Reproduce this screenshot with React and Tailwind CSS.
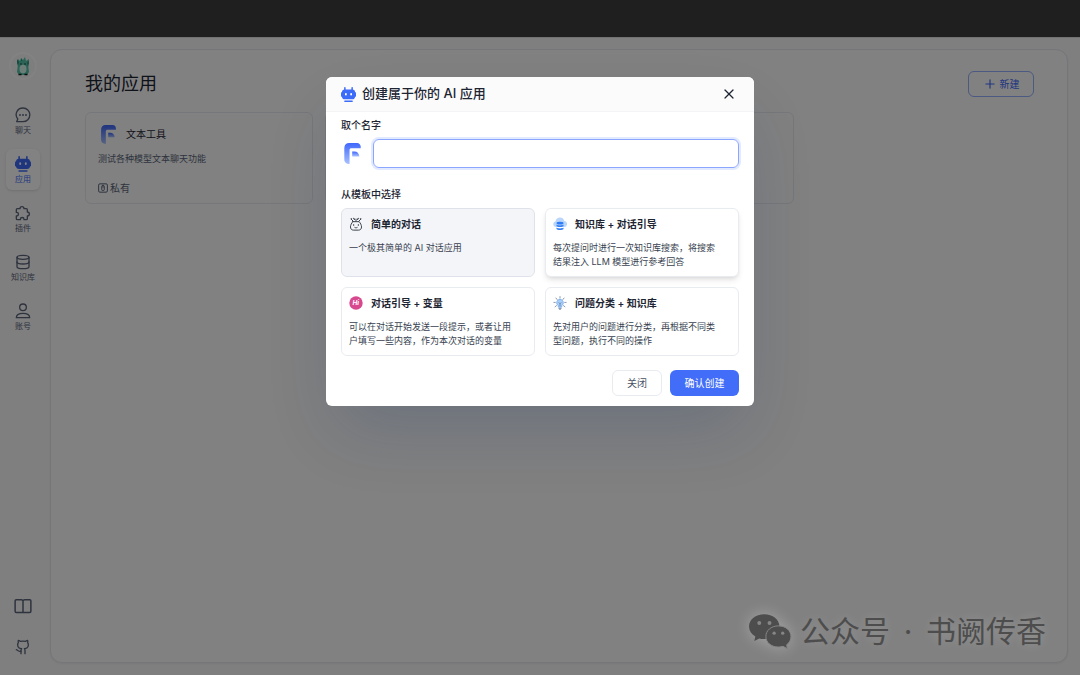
import React, { useState } from "react";
import { Database, Github, Plus, X } from "lucide-react";

function ChatIcon({ className }) {
  return (
    <svg viewBox="0 0 24 24" fill="none" className={className} stroke="currentColor" strokeWidth="2" strokeLinecap="round" strokeLinejoin="round">
      <path d="M12 1.500a10 10 0 1 1 0 20.500H2.500l1.700-4A10 10 0 0 1 12 1.500z" />
      <path d="M7.500 12h.01M12 12h.01M16.500 12h.01" strokeWidth="2.800" />
    </svg>
  );
}

function RobotIcon({ className }) {
  return (
    <svg viewBox="0 0 24 24" className={className} fill="currentColor">
      <rect x="5" y="0" width="2.400" height="6" rx="1.200" />
      <rect x="16.600" y="0" width="2.400" height="6" rx="1.200" />
      <rect x="0" y="8" width="24" height="8" rx="2" />
      <rect x="1.500" y="4" width="21" height="15.500" rx="4.500" />
      <rect x="6.400" y="9.500" width="2.800" height="4" rx="1.400" fill="#fff" />
      <rect x="14.800" y="9.500" width="2.800" height="4" rx="1.400" fill="#fff" />
      <rect x="5" y="21.400" width="14" height="2.400" rx="1.200" />
    </svg>
  );
}

function PluginIcon({ className }) {
  return (
    <svg viewBox="0 0 24 24" fill="none" className={className} stroke="currentColor" strokeWidth="2" strokeLinejoin="round">
      <path d="M7.500 5.500a3 3 0 0 1 6 0H17A1.500 1.500 0 0 1 18.500 7v3.500a3 3 0 0 1 0 6v4A1.500 1.500 0 0 1 17 22h-3.500v-.5a2.700 2.700 0 0 0-5.400 0v.5H3.500A1.500 1.500 0 0 1 2 20.500v-4h.5a2.700 2.700 0 0 0 0-5.400H2V7a1.500 1.500 0 0 1 1.500-1.500z" />
    </svg>
  );
}

function UserIcon({ className }) {
  return (
    <svg viewBox="0 0 24 24" fill="none" className={className} stroke="currentColor" strokeWidth="2" strokeLinejoin="round">
      <circle cx="12" cy="6.500" r="5" />
      <path d="M2 22c0-4 4.200-6.500 10-6.500S22 18 22 22z" />
    </svg>
  );
}

function BookIcon({ className }) {
  return (
    <svg viewBox="0 0 24 24" fill="none" className={className} stroke="currentColor" strokeWidth="2" strokeLinejoin="round">
      <path d="M12 5c-.4-1-1-1.500-2-1.500H3A1.500 1.500 0 0 0 1.500 5v14A1.500 1.500 0 0 0 3 20.500h18a1.500 1.500 0 0 0 1.500-1.500V5A1.500 1.500 0 0 0 21 3.500h-7c-1 0-1.600.5-2 1.500zM12 5v15" />
    </svg>
  );
}

function Logo({ className }) {
  return (
    <svg viewBox="0 0 50 64" className={className}>
      <defs>
        <linearGradient id="logoFill" x1="0" y1="0" x2="0" y2="1">
          <stop offset="0" stopColor="#3f67fb" />
          <stop offset="1" stopColor="#a9c1ff" />
        </linearGradient>
      </defs>
      <path fill="url(#logoFill)" d="M15 0h24c6 0 10 4 11 10v6H22c-4 0-6 2-6 6v42C6 64 0 58 0 50V15C0 6 6 0 15 0z" />
      <path fill="url(#logoFill)" d="M24 26h7c8 0 14 6 15 15H24z" />
    </svg>
  );
}

function AvatarIcon() {
  return (
    <svg viewBox="0 0 16 20" className="h-5 w-4">
      <path fill="#55c4a8" d="M3 3l2 2 1-3 2 2 2-3 1 4 3-2-1 5 1 8-2 3H4l-2-3 1-8z" />
      <path fill="#2f8f7c" d="M2 3l2 3-1 4-1-3zM13.500 4l.5 3-1 4-1-4zM6.500 2l.8 3H6z" />
      <ellipse cx="8" cy="13" rx="3.500" ry="4.200" fill="#d6f5ea" />
      <circle cx="6" cy="8" r=".8" fill="#17443b" />
      <circle cx="10" cy="8" r=".8" fill="#17443b" />
      <path d="M3.500 18.500h3M9.500 18.500h3" stroke="#1b1b1b" strokeWidth="1.600" />
    </svg>
  );
}

function PrivateIcon() {
  return (
    <svg viewBox="0 0 24 24" fill="none" className="size-[10px]" stroke="currentColor" strokeWidth="2.400">
      <rect x="1.500" y="2" width="21" height="20" rx="3" />
      <rect x="9" y="6" width="6" height="12" rx="2" />
      <path d="M12 4v7" />
    </svg>
  );
}

function SimpleBotIcon() {
  return (
    <svg viewBox="0 0 24 24" fill="none" className="size-[14px]" stroke="#3b414d" strokeWidth="1.700" strokeLinecap="round" strokeLinejoin="round">
      <path d="M6.500 8h11c2 2.500 4 6 4 9 0 3.500-2 5.500-5.500 5.500H8c-3.500 0-5.500-2-5.500-5.500 0-3 2-6.500 4-9z" />
      <path d="M7 7L4 4M17 7l3-3M12 7V3.500" />
      <path d="M3.500 3h1M19.500 3h1M8 2.500l1.500 1.500M16 2.500L14.500 4" strokeWidth="2" />
      <path d="M8 13v1.500M16 13v1.500M10 18c1.300.8 2.700.8 4 0" />
    </svg>
  );
}

function CloudDataIcon() {
  return (
    <svg viewBox="0 0 24 24" className="size-[14px]">
      <path fill="#bcd6fb" d="M5 17a5 5 0 0 1-.5-9.900A7.500 7.500 0 0 1 19.200 7 5 5 0 0 1 19 17z" />
      <g fill="#2f7df6">
        <ellipse cx="12" cy="10.500" rx="6" ry="2.300" />
        <path d="M6 13c2 2 10 2 12 0v2.600c-2 2.300-10 2.300-12 0z" />
        <path d="M6 18c2 2 10 2 12 0v2.600c-2 2.300-10 2.300-12 0z" />
      </g>
    </svg>
  );
}

function HiIcon() {
  return (
    <svg viewBox="0 0 24 24" className="size-[14px]">
      <circle cx="12" cy="12" r="11.500" fill="#d8488f" />
      <text x="11.500" y="16" textAnchor="middle" fill="#fff" fontSize="11" fontWeight="700" fontStyle="italic" fontFamily="Inter, sans-serif">
        Hi
      </text>
    </svg>
  );
}

function BulbIcon() {
  return (
    <svg viewBox="0 0 24 24" fill="none" className="size-[14px]" stroke="#7d8ca3" strokeWidth="1.500" strokeLinecap="round">
      <path d="M12 1v2M5 3.500L7 6M19 3.500L17 6M1.500 11H4M22.500 11H20M3.500 18.500L6 16.500M20.500 18.500L18 16.500" />
      <path fill="#a9cffa" stroke="#7fb0ea" d="M12 5.500a6 6 0 0 0-3 11V19h6v-2.500a6 6 0 0 0-3-11z" />
      <path d="M10 21h4M11.500 23h1" stroke="#4f6f9c" />
      <path d="M12 17v-4M10.500 11.500L12 13l1.500-1.500" stroke="#4f6f9c" strokeWidth="1.200" />
    </svg>
  );
}

function WechatIcon() {
  return (
    <svg viewBox="54 68 130 106" className="h-[35px] w-[43px]">
      <path fill="#4d4d4d" d="M100 69c26 0 46 16 46 37s-20 38-46 38c-6 0-11-1-15-2l-15 8 3-14c-12-7-19-17-19-30 0-21 20-37 46-37z" />
      <path fill="#4d4d4d" stroke="#868686" strokeWidth="3" d="M143 104c22 0 38 14 38 32 0 11-5 19-13 25l2 12-13-7c-4 1-9 2-14 2-22 0-38-14-38-32s16-32 38-32z" />
      <g fill="#868686">
        <circle cx="85" cy="95" r="6" />
        <circle cx="116" cy="95" r="6" />
        <circle cx="130" cy="126" r="5" />
        <circle cx="156" cy="126" r="5" />
      </g>
    </svg>
  );
}

const navs = [
  { label: "聊天", icon: <ChatIcon className="size-4" /> },
  { label: "应用", icon: <RobotIcon className="size-4" />, active: true },
  { label: "插件", icon: <PluginIcon className="size-4" /> },
  { label: "知识库", icon: <Database className="size-4" /> },
  { label: "账号", icon: <UserIcon className="size-4" /> },
];

const templates = [
  {
    id: "simple",
    name: "简单的对话",
    intro: "一个极其简单的 AI 对话应用",
    icon: <SimpleBotIcon />,
  },
  {
    id: "dataset",
    name: "知识库 + 对话引导",
    intro: "每次提问时进行一次知识库搜索，将搜索结果注入 LLM 模型进行参考回答",
    icon: <CloudDataIcon />,
    raised: true,
  },
  {
    id: "guide",
    name: "对话引导 + 变量",
    intro: "可以在对话开始发送一段提示，或者让用户填写一些内容，作为本次对话的变量",
    icon: <HiIcon />,
  },
  {
    id: "classify",
    name: "问题分类 + 知识库",
    intro: "先对用户的问题进行分类，再根据不同类型问题，执行不同的操作",
    icon: <BulbIcon />,
  },
];

function Sidebar() {
  return (
    <aside className="flex w-[46px] shrink-0 flex-col items-center pt-[15px] pb-5 text-[#5a6579]">
      <div className="flex size-7 items-center justify-center rounded-full border-2 border-white bg-[#f7f8fa]">
        <AvatarIcon />
      </div>
      <nav className="mt-5 flex flex-col gap-2">
        {navs.map((item) => (
          <a
            key={item.label}
            href="#"
            className={
              item.active
                ? "flex h-[41px] w-[34px] flex-col items-center gap-[2px] rounded-md bg-white pt-[7px] text-[#3d6bf9] shadow-sm"
                : "flex h-[41px] w-[34px] flex-col items-center gap-[2px] rounded-md pt-[7px]"
            }
          >
            {item.icon}
            <span className="text-[8px] leading-[10px] whitespace-nowrap">{item.label}</span>
          </a>
        ))}
      </nav>
      <div className="mt-auto flex flex-col items-center gap-6">
        <a href="#" aria-label="文档">
          <BookIcon className="size-[18px]" />
        </a>
        <a href="#" aria-label="GitHub">
          <Github className="size-4" />
        </a>
      </div>
    </aside>
  );
}

function AppList() {
  return (
    <main className="my-3 mr-3 ml-1 flex-1 rounded-xl border border-[#e4e7ee] bg-[#fdfdfe] pt-5 pr-[33px] pl-[34px] shadow-xs">
      <div className="flex items-center justify-between">
        <h1 className="text-lg leading-7 text-[#1d2532]">我的应用</h1>
        <button className="flex h-[26px] w-[66px] items-center justify-center gap-[3px] rounded-md border border-[#94b0ff] text-[10px] text-[#3d6bf9]">
          <Plus className="size-[14px]" />
          新建
        </button>
      </div>
      <div className="mt-[14px] grid grid-cols-4 gap-3">
        <article className="h-[92px] rounded-md border border-[#e8eaef] px-3 pt-[11px] text-[#5a6579]">
          <div className="flex items-center gap-[10px] pl-[3px]">
            <Logo className="h-[19px] w-[15px]" />
            <h2 className="text-[10px] leading-5 text-[#1d2532]">文本工具</h2>
          </div>
          <p className="mt-2 text-[9px] leading-[14px]">测试各种模型文本聊天功能</p>
          <div className="mt-[15px] flex items-center gap-0.5 text-[10px] leading-[14px]">
            <PrivateIcon />
            私有
          </div>
        </article>
        <article className="h-[92px] rounded-md border border-[#e8eaef]"></article>
        <article className="h-[92px] rounded-md border border-[#e8eaef]"></article>
      </div>
    </main>
  );
}

function CreateModal() {
  const [name, setName] = useState("");
  const [template, setTemplate] = useState("simple");

  return (
    <section
      role="dialog"
      aria-label="创建属于你的 AI 应用"
      className="w-full max-w-[428px] overflow-hidden rounded-md bg-white text-[#1d2532] shadow-[0_32px_64px_-12px_rgba(19,51,107,0.2)]"
    >
      <header className="flex h-[35px] items-center border-b border-[#f4f4f7] bg-[#fbfbfc] px-[15px]">
        <RobotIcon className="size-[15px] text-[#3d6bf9]" />
        <h2 className="ml-[6px] flex-1 text-[13px] font-medium">创建属于你的 AI 应用</h2>
        <button aria-label="关闭窗口" className="flex size-5 items-center justify-center">
          <X className="size-4" strokeWidth={1.8} />
        </button>
      </header>
      <form className="px-[15px] pt-[5px] pb-[10px]" onSubmit={(e) => e.preventDefault()}>
        <label htmlFor="appName" className="block text-[10px] leading-4 font-medium">
          取个名字
        </label>
        <div className="mt-1.5 flex items-center gap-3 pl-[3px]">
          <Logo className="h-[21px] w-[17px] shrink-0" />
          <input
            id="appName"
            value={name}
            onChange={(e) => setName(e.target.value)}
            className="h-[29px] min-w-0 flex-1 rounded-md border border-[#8ba6ff] px-3 text-[10px] ring-2 ring-[#3370ff]/15 outline-none"
          />
        </div>
        <h3 className="mt-[18px] text-[10px] leading-4 font-medium">从模板中选择</h3>
        <div className="mt-1.5 grid grid-cols-2 gap-[10px]">
          {templates.map((item) => {
            let look = "border-[#e8ebf0] bg-white";
            if (item.id === template) look = "border-[#dfe2ea] bg-[#f4f5f8]";
            else if (item.raised) look = "border-[#e8ebf0] bg-white shadow-md";
            return (
              <button
                key={item.id}
                type="button"
                onClick={() => setTemplate(item.id)}
                className={`flex h-[69px] flex-col rounded-md border py-[7px] pr-4 pl-[7px] text-left ${look}`}
              >
                <span className="flex items-center gap-2 text-[10px] leading-4 font-semibold">
                  {item.icon}
                  {item.name}
                </span>
                <span className="mt-[9px] text-[9px] leading-[14px] text-[#383f50]">{item.intro}</span>
              </button>
            );
          })}
        </div>
        <div className="mt-[14px] flex justify-end gap-2 text-[10px]">
          <button type="button" className="h-[26px] w-[50px] rounded-md border border-[#e8ebf0] text-[#485264]">
            关闭
          </button>
          <button type="submit" className="h-[26px] w-[69px] rounded-md bg-[#416df8] text-white">
            确认创建
          </button>
        </div>
      </form>
    </section>
  );
}

export default function App() {
  return (
    <div className="flex h-screen flex-col bg-[#1f1f1f] font-['Inter','Noto_Sans_CJK_SC',sans-serif]">
      <div className="h-[37px] shrink-0"></div>
      <div className="relative flex flex-1 bg-[#f9f9fb]">
        <Sidebar />
        <AppList />
        <div className="absolute inset-0 flex items-start justify-center border-t border-black/10 bg-black/49 pt-[39px]">
          <CreateModal />
        </div>
        <div className="absolute right-[34px] bottom-[23px] flex items-center text-[30px] leading-[42px] text-[#4d4d4d] [text-shadow:0_0_12px_rgba(255,255,255,0.2)]">
          <span className="mr-2 drop-shadow-[0_0_8px_rgba(255,255,255,0.3)]">
            <WechatIcon />
          </span>
          <span>公众号</span>
          <span className="w-9 text-center">·</span>
          <span>书阙传香</span>
        </div>
      </div>
    </div>
  );
}
